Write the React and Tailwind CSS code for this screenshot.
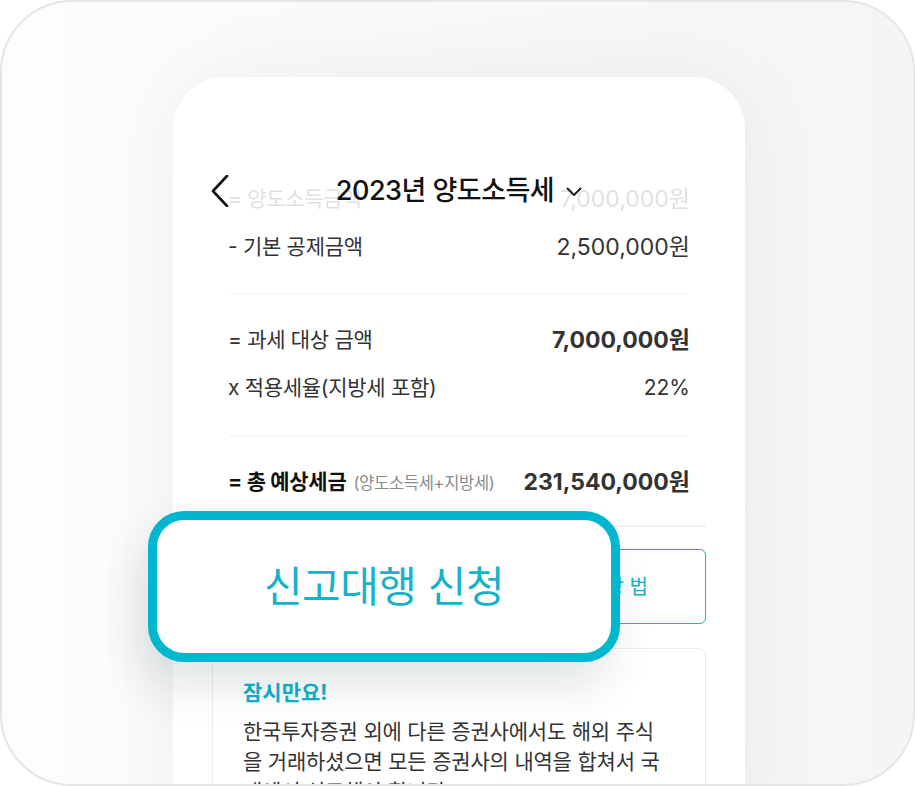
import React from 'react';

// 공통 폰트 (숫자는 Inter, 한글은 Noto CJK KR)
const FONT = "font-['Inter','Noto_Sans_CJK_KR',sans-serif]";

// 계산 내역 행
const ROWS_TOP = [
  { label: '= 양도소득금액', value: '7,000,000' },
  { label: '- 기본 공제금액', value: '2,500,000' },
];

const ROWS_MID = [
  { label: '= 과세 대상 금액', value: '7,000,000', bold: true },
  { label: 'x 적용세율(지방세 포함)', value: '22%', noUnit: true },
];

function Dotted() {
  return (
    <div className="mx-[57px] h-px bg-[repeating-linear-gradient(to_right,#d6d6d6_0_1px,transparent_1px_4px)]"></div>
  );
}

function Row({ label, value, bold, noUnit }) {
  return (
    <div className="h-[48px] flex items-center justify-between text-[#333]">
      <span className="text-[21px] tracking-[-0.3px]">{label}</span>
      <span className={`${noUnit ? 'text-[21px]' : 'text-[23px]'} ${bold ? 'font-bold' : ''}`}>
        {value}
        {!noUnit && '원'}
      </span>
    </div>
  );
}

export default function App() {
  return (
    <div className={`w-[915px] h-[786px] bg-white ${FONT}`}>
      <div className="h-full rounded-[72px] border-2 border-[#e6e6e6] bg-gradient-to-r from-[#fdfdfd] to-[#f5f5f5] overflow-hidden pt-[75px] pl-[171px]">
        {/* 폰 화면 */}
        <div className="relative w-[572px] h-[760px] bg-white rounded-t-[52px] shadow-[0_0_90px_rgba(0,0,0,0.06)]">
          <div className="pt-[75px]">
            <Dotted />
            <div className="px-[55px] pt-[22px]">
              {ROWS_TOP.map((r) => (
                <Row key={r.label} {...r} />
              ))}
            </div>
            <div className="mt-[22px]">
              <Dotted />
            </div>
            <div className="px-[55px] pt-[22px]">
              {ROWS_MID.map((r) => (
                <Row key={r.label} {...r} />
              ))}
            </div>
            <div className="mt-[23px]">
              <Dotted />
            </div>
            <div className="px-[55px] pt-[22px]">
              <div className="h-[48px] flex items-center justify-between">
                <span className="flex items-baseline">
                  <span className="text-[21px] font-bold text-[#111] tracking-[-0.3px]">= 총 예상세금</span>
                  <span className="ml-[7px] text-[16.5px] text-[#8a8a8a] tracking-[-0.3px]">(양도소득세+지방세)</span>
                </span>
                <span className="text-[23px] font-bold text-[#333]">231,540,000원</span>
              </div>
            </div>

            <div className="mx-[39px] mt-[19px] h-[2px] bg-[#f1f1f1]"></div>

            <div className="mx-[39px] mt-[22px] h-[75px] rounded-[6px] border-[1.5px] border-[#1ab7ce] flex items-center justify-center text-[20px] text-[#14b1c8]">
              홈택스에서 직접 양도소득세를 신고하는 방 법
            </div>

            {/* 안내 박스 */}
            <div className="mx-[39px] mt-[24px] rounded-[8px] border border-[#ececec] pl-[30px] pr-[37px] pt-[29px] pb-[30px]">
              <p className="text-[21px] leading-[30px] font-bold text-[#12b0c8]">잠시만요!</p>
              <p className="mt-[9px] text-[21px] leading-[30px] text-[#333] tracking-[-0.2px] break-all">
                한국투자증권 외에 다른 증권사에서도 해외 주식을 거래하셨으면 모든 증권사의 내역을 합쳐서 국내에서 신고해야 합니다.
              </p>
            </div>
          </div>

          {/* 상단 헤더 (스크롤된 내용 위) */}
          <div className="absolute inset-x-0 top-0 h-[150px] rounded-t-[52px] bg-white/85">
            <div className="relative mt-[94px] h-[40px] flex items-center justify-center">
              <svg className="absolute left-[38px] top-[4px]" width="18" height="32" viewBox="0 0 18 32" fill="none">
                <polyline points="16,1 2,16 16,31" stroke="#111" strokeWidth="2.6" strokeLinecap="round" strokeLinejoin="round" />
              </svg>
              <span className="text-[27px] font-medium text-[#111] tracking-[-0.5px]">2023년 양도소득세</span>
              <svg className="ml-[12px] mt-[2px]" width="16" height="10" viewBox="0 0 16 10" fill="none">
                <polyline points="1.5,1.5 8,8 14.5,1.5" stroke="#222" strokeWidth="2" strokeLinecap="round" strokeLinejoin="round" />
              </svg>
            </div>
          </div>

          {/* 신고대행 신청 강조 버튼 */}
          <div className="absolute left-[-25px] top-[434px] w-[472px] h-[151px] rounded-[36px] border-[9px] border-[#00b7cf] bg-white shadow-[-10px_25px_45px_rgba(0,40,50,0.12)] flex items-center justify-center">
            <span className="text-[42px] text-[#17b2ca] tracking-[-0.5px]">신고대행 신청</span>
          </div>
        </div>
      </div>
    </div>
  );
}
